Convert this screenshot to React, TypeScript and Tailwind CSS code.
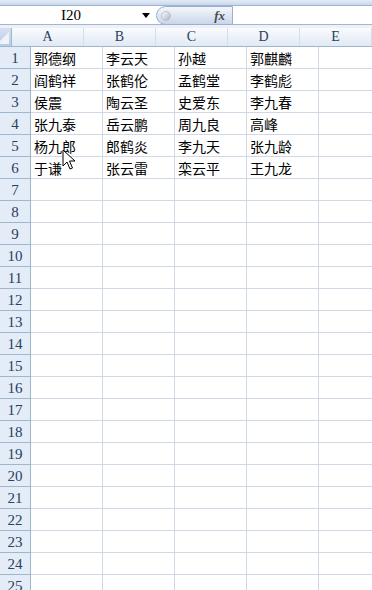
import React from "react";

const COLS = ["A", "B", "C", "D", "E"];

// cell values by row
const DATA: string[][] = [
  ["郭德纲", "李云天", "孙越", "郭麒麟"],
  ["阎鹤祥", "张鹤伦", "孟鹤堂", "李鹤彪"],
  ["侯震", "陶云圣", "史爱东", "李九春"],
  ["张九泰", "岳云鹏", "周九良", "高峰"],
  ["杨九郎", "郎鹤炎", "李九天", "张九龄"],
  ["于谦", "张云雷", "栾云平", "王九龙"],
];

const ROWS = Array.from({ length: 26 }, (_, i) => i + 1);

const headFont = { fontFamily: '"Liberation Serif", "DejaVu Serif", serif' };
const cellFont = { fontFamily: '"Noto Sans CJK SC", "Noto Sans", sans-serif' };

const Cursor = () => (
  <svg width="14" height="22" viewBox="0 0 14 22" className="absolute left-[62px] top-[149px]">
    <path d="M1 1 L1 17 L5 13 L8 20 L10.5 19 L7.5 12 L13 12 Z" fill="#fff" stroke="#000" strokeWidth="1" strokeLinejoin="round" />
  </svg>
);

export default function App() {
  return (
    <div className="relative w-[372px] h-[590px] overflow-hidden bg-white">
      {/* top strip */}
      <div className="h-[6px] bg-gradient-to-b from-[#e3ebf6] to-[#c9d8ec] border-b border-[#9fb4d2]" />

      {/* name box + formula bar */}
      <div className="flex h-[19px] border-b border-[#a3b6cf] bg-white">
        <div className="w-[156px] flex items-center relative">
          <span className="w-[142px] text-center text-[15px] text-black leading-none" style={headFont}>
            I20
          </span>
          <svg width="8" height="5" viewBox="0 0 8 5">
            <path d="M0 0 H8 L4 5 Z" fill="#000" />
          </svg>
        </div>
        <div className="w-[77px] h-[19px] flex items-center rounded-l-full border border-[#9cb0cc] bg-gradient-to-b from-[#f4f7fc] via-[#dfe7f3] to-[#c9d6ea] relative">
          <div className="ml-[4px] w-[10px] h-[10px] rounded-full bg-gradient-to-br from-[#ffffff] to-[#aab4c2] border border-[#b8c2d0]" />
          <span
            className="ml-auto mr-[7px] text-[13px] italic font-bold text-[#4a4a4a] leading-none"
            style={{ fontFamily: '"Liberation Serif", serif' }}
          >
            fx
          </span>
        </div>
        <div className="flex-1 bg-white" />
      </div>

      {/* gap */}
      <div className="h-[3px] bg-[#eef2f8]" />

      {/* column header */}
      <div className="flex h-[19px] border-b border-[#9eb6ce]">
        <div className="w-[31px] border-r border-[#9eb6ce] bg-gradient-to-b from-[#d5e1f1] to-[#b9cbe6] relative">
          <svg width="12" height="12" viewBox="0 0 12 12" className="absolute right-[2px] bottom-[2px]">
            <path d="M12 0 V12 H0 Z" fill="#eef3fa" />
          </svg>
        </div>
        {COLS.map((c) => (
          <div
            key={c}
            className="w-[72px] shrink-0 border-r border-[#d5dfec] bg-gradient-to-b from-[#f9fbfe] to-[#e1e9f4] flex items-center justify-center text-[14px] text-[#2a3f5a] leading-none"
            style={headFont}
          >
            {c}
          </div>
        ))}
      </div>

      {/* grid rows */}
      {ROWS.map((r) => (
        <div key={r} className="flex h-[22px]">
          <div
            className="w-[31px] shrink-0 bg-[#e4ecf7] border-r border-[#9eb6ce] border-b border-b-[#9eb6ce] flex items-end justify-center pb-[2px] text-[15px] text-[#27415f] leading-none"
            style={headFont}
          >
            {r}
          </div>
          {COLS.map((c, ci) => (
            <div
              key={c}
              className="w-[72px] shrink-0 border-r border-b border-[#d0d7e5] flex items-center pl-[3px] text-[14px] text-black leading-none"
              style={cellFont}
            >
              {DATA[r - 1]?.[ci] ?? ""}
            </div>
          ))}
        </div>
      ))}

      <Cursor />
    </div>
  );
}
